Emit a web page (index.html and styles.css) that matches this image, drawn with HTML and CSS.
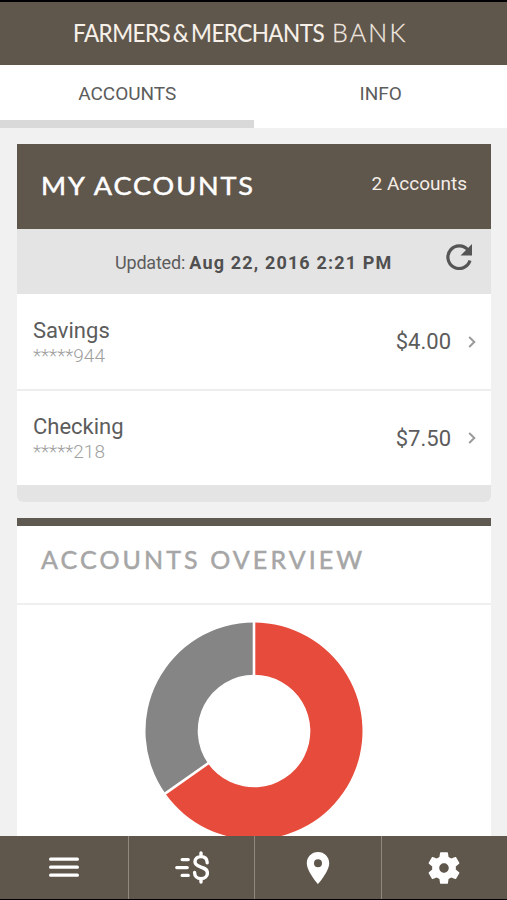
FILE: index.html
```html
<!doctype html>
<html lang="en">
  <head>
    <meta charset="UTF-8" />
    <meta name="viewport" content="width=device-width, initial-scale=1.0" />
    <title>My Accounts</title>
    <link rel="stylesheet" href="styles.css">
  </head>

  <body>
    <header class="topbar">
      <div class="logo"><span class="logo-main">FARMERS<span class="amp">&amp;</span>MERCHANTS</span><span class="logo-bank">BANK</span></div>
    </header>

    <nav class="tabs">
      <a class="tab active">ACCOUNTS</a>
      <a class="tab">INFO</a>
    </nav>

    <main class="content">
      <section class="card">
        <div class="card-header">
          <h2>MY ACCOUNTS</h2>
          <span class="count">2 Accounts</span>
        </div>
        <div class="updated">
          <p>Updated: <b>Aug 22, 2016 2:21 PM</b></p>
          <svg class="refresh" viewBox="0 0 26 26">
            <path d="M22.1 6.2 A11.3 11.3 0 1 0 24 16.6" fill="none" stroke="#555" stroke-width="3.2" />
            <path d="M26 0 V11.5 H14.6 Z" fill="#555" />
          </svg>
        </div>
        <div class="row">
          <div class="account">
            <span class="name">Savings</span>
            <span class="number">*****944</span>
          </div>
          <span class="amount">$4.00</span>
          <svg class="chevron" viewBox="0 0 8 12"><path d="M1.2 1 L6.3 6 L1.2 11" /></svg>
        </div>
        <div class="row">
          <div class="account">
            <span class="name">Checking</span>
            <span class="number">*****218</span>
          </div>
          <span class="amount">$7.50</span>
          <svg class="chevron" viewBox="0 0 8 12"><path d="M1.2 1 L6.3 6 L1.2 11" /></svg>
        </div>
        <div class="card-footer"></div>
      </section>

      <section class="card overview">
        <h2>ACCOUNTS OVERVIEW</h2>
        <svg class="chart" viewBox="-110 -110 220 220">
          <path fill="#e64b3b" d="M0 -108.5 A108.5 108.5 0 1 1 -88.7 62.5 L-46 32.4 A56.3 56.3 0 1 0 0 -56.3 Z" />
          <path fill="#858585" d="M0 -108.5 A108.5 108.5 0 0 0 -88.7 62.5 L-46 32.4 A56.3 56.3 0 0 1 0 -56.3 Z" />
          <path stroke="#fff" stroke-width="2.6" d="M0 -110 V-55 M-90 63.4 L-45 31.7" />
        </svg>
      </section>
    </main>

    <nav class="bottom-nav">
      <a>
        <svg width="30" height="22" viewBox="0 0 30 22">
          <path d="M1.6 2.2 H28.4 M1.6 10.2 H28.4 M1.6 18.2 H28.4" fill="none" stroke="#fff" stroke-width="3.2" stroke-linecap="round" />
        </svg>
      </a>
      <a>
        <svg width="34" height="33" viewBox="0 0 34 33" fill="none" stroke="#fff" stroke-width="3.4" stroke-linecap="round">
          <path d="M7.2 8.6 H13.2 M1.8 16.6 H12.2 M7.2 24.4 H13.2" />
          <path d="M32.2 11.8 C32.2 7.6 29.8 5.6 26 5.6 C22.4 5.6 20 7.8 20 10.8 C20 17.6 32.4 14.4 32.4 22 C32.4 25.4 29.8 27.6 26 27.6 C22 27.6 19.6 25 19.6 21.4 M26 2 V5 M26 28 V31" />
        </svg>
      </a>
      <a>
        <svg width="24" height="32" viewBox="0 0 24 32">
          <path fill="#fff" fill-rule="evenodd" d="M12 0 C5.6 0 .8 4.9 .8 11.2 C.8 19.4 12 32 12 32 S23.2 19.4 23.2 11.2 C23.2 4.9 18.4 0 12 0 Z M12 7.2 A4 4 0 1 1 12 15.2 A4 4 0 1 1 12 7.2 Z" />
        </svg>
      </a>
      <a>
        <svg width="38" height="38" viewBox="0 0 24 24">
          <path fill="#fff" d="M19.43 12.98c.04-.32.07-.64.07-.98s-.03-.66-.07-.98l2.11-1.65c.19-.15.24-.42.12-.64l-2-3.46c-.12-.22-.39-.3-.61-.22l-2.49 1c-.52-.4-1.08-.73-1.69-.98l-.38-2.65C14.46 2.18 14.25 2 14 2h-4c-.25 0-.46.18-.49.42l-.38 2.65c-.61.25-1.17.59-1.69.98l-2.49-1c-.23-.09-.49 0-.61.22l-2 3.46c-.13.22-.07.49.12.64l2.11 1.65c-.04.32-.07.65-.07.98s.03.66.07.98l-2.11 1.65c-.19.15-.24.42-.12.64l2 3.46c.12.22.39.3.61.22l2.49-1c.52.4 1.08.73 1.69.98l.38 2.65c.03.24.24.42.49.42h4c.25 0 .46-.18.49-.42l.38-2.65c.61-.25 1.17-.59 1.69-.98l2.49 1c.23.09.49 0 .61-.22l2-3.46c.12-.22.07-.49-.12-.64l-2.11-1.65zM12 15c-1.65 0-3-1.35-3-3s1.35-3 3-3 3 1.35 3 3-1.35 3-3 3z" />
        </svg>
      </a>
    </nav>
  </body>
</html>
```
FILE: styles.css
```css
* {
  box-sizing: border-box;
}

body {
  margin: 0;
  height: 900px;
  overflow: hidden;
  display: flex;
  flex-direction: column;
  font-family: Roboto, sans-serif;
  background-color: #f1f1f1;
  color: #5c5c5c;
}

h2,
p {
  margin: 0;
}

.topbar {
  flex: none;
  height: 65px;
  border-top: 2px solid #000;
  background-color: #5f564c;
  padding: 15px 0 0 73px;
}

.logo {
  display: flex;
  font-family: Lato, sans-serif;
  font-size: 25px;
  line-height: 30px;
  color: #f7f1e9;
  white-space: nowrap;
}

.logo-main {
  width: 259px;
  letter-spacing: -0.6px;
  transform: scaleX(0.9);
  transform-origin: left;
  -webkit-text-stroke: 0.1px #f7f1e9;
}

.amp {
  margin: 0 3px;
}

.logo-bank {
  font-weight: 300;
  letter-spacing: 2.2px;
  -webkit-text-stroke: 0.3px #e6ddd2;
}

.tabs {
  flex: none;
  display: flex;
  height: 63px;
  background-color: #fff;
}

.tab {
  width: 254px;
  padding: 17px 0 0 1px;
  text-align: center;
  font-size: 19px;
  line-height: 23px;
  border-bottom: 8px solid transparent;
}

.tab.active {
  border-bottom-color: #d9d9d9;
}

.content {
  flex: 1;
  min-height: 0;
  overflow: hidden;
  padding: 16px 16px 0 17px;
}

.card {
  background-color: #fff;
  margin-bottom: 16px;
  border-radius: 0 0 6px 6px;
  overflow: hidden;
}

.card h2 {
  font-family: Lato, sans-serif;
  font-size: 25px;
  font-weight: 400;
  line-height: 30px;
  white-space: nowrap;
  transform-origin: left;
  -webkit-text-stroke: 0.5px currentColor;
}

.card-header {
  display: flex;
  justify-content: space-between;
  height: 85px;
  padding: 26px 24px 0;
  background-color: #5f564c;
  color: #fff;
}

.card-header h2 {
  letter-spacing: 1.8px;
  transform: scaleX(1.08);
}

.count {
  font-size: 19px;
  line-height: 27px;
  color: #f4ede6;
}

.updated {
  display: flex;
  height: 65px;
  background-color: #e4e4e4;
}

.updated p {
  width: 429px;
  padding: 23px 0 0 98px;
  font-size: 18px;
  line-height: 22px;
  letter-spacing: -0.2px;
  white-space: nowrap;
}

.updated b {
  letter-spacing: 1.15px;
  color: #505050;
}

.refresh {
  width: 26px;
  height: 26px;
  margin-top: 15px;
}

.row {
  display: flex;
  align-items: center;
  height: 95px;
  padding: 1px 15px 0 16px;
}

.row + .row {
  height: 96px;
  border-top: 2px solid #ededed;
}

.account {
  flex: 1;
  display: flex;
  flex-direction: column;
}

.name {
  font-size: 22px;
  line-height: 26px;
}

.number {
  font-size: 19px;
  font-weight: 300;
  line-height: 23px;
  color: #a0a0a0;
}

.amount {
  font-size: 22px;
  padding-bottom: 1px;
}

.chevron {
  width: 8px;
  height: 12px;
  margin: 0 0 1px 17px;
}

.chevron path {
  fill: none;
  stroke: #9b9b9b;
  stroke-width: 2;
}

.card-footer {
  height: 17px;
  background-color: #e4e4e4;
}

.overview {
  border-top: 8px solid #5f5a51;
}

.overview h2 {
  height: 79px;
  padding: 18px 24px 0;
  border-bottom: 2px solid #efefef;
  color: #a6a6a6;
  letter-spacing: 3.1px;
}

.chart {
  display: block;
  width: 220px;
  height: 220px;
  margin: 16px auto;
}

.bottom-nav {
  flex: none;
  display: flex;
  height: 64px;
  background-color: #5f564c;
  border-bottom: 1px solid #000;
}

.bottom-nav a {
  flex: 1;
  display: flex;
  align-items: center;
  justify-content: center;
}

.bottom-nav a:first-child {
  flex: 0 0 128px;
}

.bottom-nav a + a {
  border-left: 1px solid #91897f;
}
```
